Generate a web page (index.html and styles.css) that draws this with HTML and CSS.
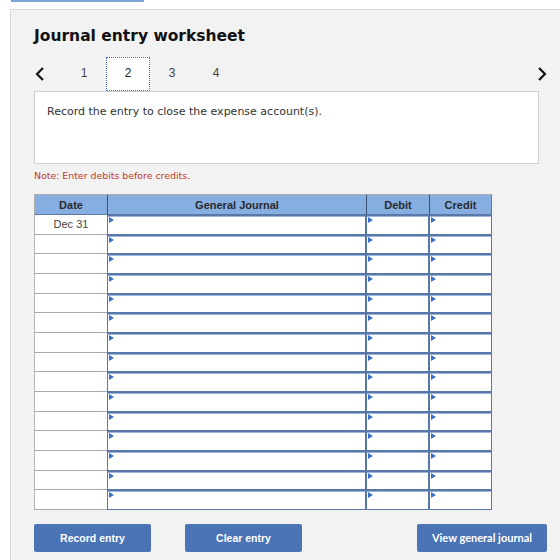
FILE: index.html
```html
<!DOCTYPE html>
<html lang="en">
<head>
<meta charset="utf-8">
<title>Journal entry worksheet</title>
<link rel="stylesheet" href="styles.css">
</head>
<body>
<div class="tab-line"></div>
<div class="panel">
  <h1 class="title">Journal entry worksheet</h1>

  <div class="steps">
    <span class="chev">
      <svg width="12" height="16" viewBox="0 0 12 16"><polyline points="9,2 3,8 9,14" fill="none" stroke="#111" stroke-width="2.2"/></svg>
    </span>
    <span class="step">1</span>
    <span class="step current">2</span>
    <span class="step">3</span>
    <span class="step">4</span>
    <span class="chev next">
      <svg width="12" height="16" viewBox="0 0 12 16"><polyline points="3,2 9,8 3,14" fill="none" stroke="#111" stroke-width="2.2"/></svg>
    </span>
  </div>

  <div class="prompt">Record the entry to close the expense account(s).</div>

  <p class="note">Note: Enter debits before credits.</p>

  <table class="journal">
    <colgroup>
      <col class="c-date"><col class="c-acct"><col class="c-amt"><col class="c-amt">
    </colgroup>
    <thead>
      <tr>
        <th class="h-date">Date</th>
        <th>General Journal</th>
        <th>Debit</th>
        <th>Credit</th>
      </tr>
    </thead>
    <tbody>
      <tr><td class="date">Dec 31</td><td class="in"></td><td class="in"></td><td class="in"></td></tr>
      <tr><td class="date"></td><td class="in"></td><td class="in"></td><td class="in"></td></tr>
      <tr><td class="date"></td><td class="in"></td><td class="in"></td><td class="in"></td></tr>
      <tr><td class="date"></td><td class="in"></td><td class="in"></td><td class="in"></td></tr>
      <tr><td class="date"></td><td class="in"></td><td class="in"></td><td class="in"></td></tr>
      <tr><td class="date"></td><td class="in"></td><td class="in"></td><td class="in"></td></tr>
      <tr><td class="date"></td><td class="in"></td><td class="in"></td><td class="in"></td></tr>
      <tr><td class="date"></td><td class="in"></td><td class="in"></td><td class="in"></td></tr>
      <tr><td class="date"></td><td class="in"></td><td class="in"></td><td class="in"></td></tr>
      <tr><td class="date"></td><td class="in"></td><td class="in"></td><td class="in"></td></tr>
      <tr><td class="date"></td><td class="in"></td><td class="in"></td><td class="in"></td></tr>
      <tr><td class="date"></td><td class="in"></td><td class="in"></td><td class="in"></td></tr>
      <tr><td class="date"></td><td class="in"></td><td class="in"></td><td class="in"></td></tr>
      <tr><td class="date"></td><td class="in"></td><td class="in"></td><td class="in"></td></tr>
      <tr><td class="date"></td><td class="in"></td><td class="in"></td><td class="in"></td></tr>
    </tbody>
  </table>

  <div class="actions">
    <button class="btn">Record entry</button>
    <button class="btn">Clear entry</button>
    <button class="btn wide">View general journal</button>
  </div>
</div>
</body>
</html>
```
FILE: styles.css
```css
html, body {
  margin: 0;
  background: #ffffff;
}

body {
  font-family: "DejaVu Sans", Verdana, sans-serif;
  color: #333;
}

.tab-line {
  margin-left: 11px;
  width: 133px;
  height: 2px;
  background: #7fa6da;
}

.panel {
  margin: 7px 0 0 10px;
  border-top: 1px solid #d8d8d8;
  border-left: 1px solid #d8d8d8;
  background: #f2f2f2;
  padding: 15px 0 8px 23px;
  min-height: 530px;
  box-sizing: border-box;
}

.title {
  margin: 0;
  font-size: 15.5px;
  line-height: 22px;
  font-weight: bold;
  color: #111;
}

.steps {
  margin-top: 10px;
  width: 514px;
  height: 34px;
  display: flex;
  align-items: center;
}

.chev {
  width: 28px;
  height: 34px;
  display: flex;
  align-items: center;
}

.chev.next {
  margin-left: auto;
  width: 12px;
}

.step {
  width: 44px;
  height: 34px;
  display: flex;
  align-items: center;
  justify-content: center;
  padding-bottom: 3px;
  font-family: "Liberation Sans", Arial, sans-serif;
  font-size: 12px;
  color: #444;
  box-sizing: border-box;
}

.step.current {
  background: #fff;
  border: 1px dotted #3f6fb8;
  color: #222;
}

.prompt {
  width: 505px;
  height: 73px;
  box-sizing: border-box;
  background: #fff;
  border: 1px solid #cfcfcf;
  padding: 12px 12px 0;
  font-size: 11px;
  line-height: 15px;
  color: #333;
}

.note {
  margin: 5px 0 0;
  font-size: 9.4px;
  line-height: 13px;
  color: #c0392b;
}

.journal {
  margin-top: 12px;
  border-collapse: separate;
  border-spacing: 0;
  table-layout: fixed;
  width: 458px;
  font-family: "Liberation Sans", Arial, sans-serif;
}

.c-date { width: 73px; }
.c-acct { width: 259px; }
.c-amt { width: 63px; }

.journal th {
  height: 21px;
  padding: 0;
  box-sizing: border-box;
  background: #86aee0;
  border-top: 1px solid #b0b0b0;
  border-left: 1px solid #3d5478;
  border-bottom: 1px solid #5c78a4;
  font-size: 11px;
  font-weight: bold;
  color: #2b2b2b;
  text-align: center;
}

.journal th.h-date {
  border-left: 1px solid #b0b0b0;
}

.journal th:last-child {
  border-right: 1px solid #5c78a4;
}

.journal tbody tr {
  height: 19.67px;
}

.journal td {
  padding: 0;
  box-sizing: border-box;
}

.journal td.date {
  background: #fff;
  border-left: 1px solid #b4b4b4;
  border-bottom: 1px solid #a8a8a8;
  text-align: center;
  font-size: 11px;
  color: #444;
}

.journal td.in {
  position: relative;
  background: #fff;
  border: 1px solid #5677a8;
  box-shadow: inset 0 1px 0 #9db5da;
}

/* little entry marker in the corner of each input cell */
.journal td.in::before {
  content: "";
  position: absolute;
  left: 1px;
  top: 1px;
  border-top: 3px solid transparent;
  border-bottom: 3px solid transparent;
  border-left: 5px solid #3a6fc6;
}

.actions {
  margin-top: 14px;
  width: 513px;
  display: flex;
  gap: 34px;
}

.btn {
  width: 117px;
  height: 28px;
  border: none;
  border-radius: 2px;
  background: #4a74b6;
  color: #fff;
  font-family: "Liberation Sans", Arial, sans-serif;
  font-size: 10.5px;
  font-weight: bold;
  padding: 0;
}

.btn.wide {
  width: 130px;
  margin-left: auto;
  font-family: Lato, "Liberation Sans", sans-serif;
  font-size: 11px;
}
```
